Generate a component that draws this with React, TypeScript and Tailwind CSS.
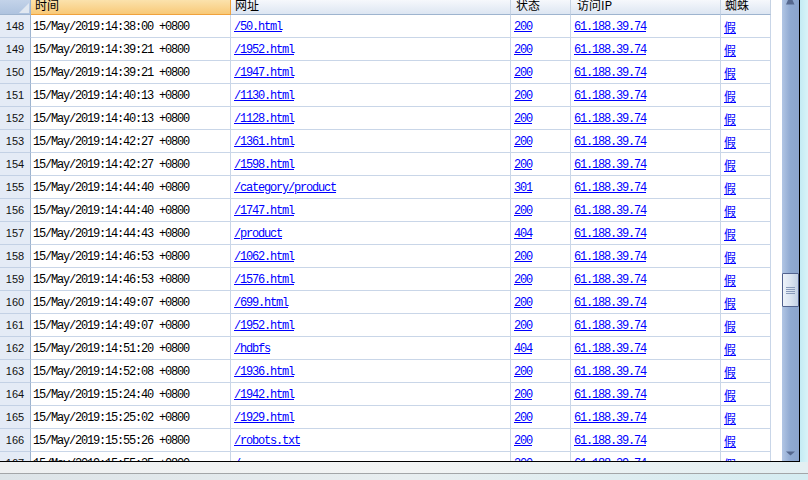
import React from "react";

type Row = { n: number; time: string; url: string; status: string };

const rows: Row[] = [
    { n: 148, time: "14:38:00", url: "/50.html", status: "200" },
    { n: 149, time: "14:39:21", url: "/1952.html", status: "200" },
    { n: 150, time: "14:39:21", url: "/1947.html", status: "200" },
    { n: 151, time: "14:40:13", url: "/1130.html", status: "200" },
    { n: 152, time: "14:40:13", url: "/1128.html", status: "200" },
    { n: 153, time: "14:42:27", url: "/1361.html", status: "200" },
    { n: 154, time: "14:42:27", url: "/1598.html", status: "200" },
    { n: 155, time: "14:44:40", url: "/category/product", status: "301" },
    { n: 156, time: "14:44:40", url: "/1747.html", status: "200" },
    { n: 157, time: "14:44:43", url: "/product", status: "404" },
    { n: 158, time: "14:46:53", url: "/1062.html", status: "200" },
    { n: 159, time: "14:46:53", url: "/1576.html", status: "200" },
    { n: 160, time: "14:49:07", url: "/699.html", status: "200" },
    { n: 161, time: "14:49:07", url: "/1952.html", status: "200" },
    { n: 162, time: "14:51:20", url: "/hdbfs", status: "404" },
    { n: 163, time: "14:52:08", url: "/1936.html", status: "200" },
    { n: 164, time: "15:24:40", url: "/1942.html", status: "200" },
    { n: 165, time: "15:25:02", url: "/1929.html", status: "200" },
    { n: 166, time: "15:55:26", url: "/robots.txt", status: "200" },
    { n: 167, time: "15:55:35", url: "/", status: "200" },
];

const mono = "font-['Liberation_Mono',monospace] text-[12px] tracking-[-1.2px] text-black pt-[2px]";
const cjk = "font-['Noto_Sans_CJK_SC',sans-serif] text-[12px] leading-[12px]";
const cols = "grid grid-cols-[31px_200px_280px_60px_150px_50px]";
const head = "border-r border-b border-r-[#c5d2e3] border-b-[#9eb4cf] bg-gradient-to-b from-[#f6f8fc] to-[#dde6f2] overflow-hidden";

function Link({ children }: { children: React.ReactNode }) {
    return <span className="text-[#0000ff] underline underline-offset-[1px]">{children}</span>;
}

export default function App() {
    return (
        <div className="w-[808px] h-[480px] overflow-hidden bg-[#eef1f2] flex flex-col">
            <div className="flex h-[462px] shrink-0">
                <div className="w-[800px] h-[462px] border-r border-b border-black bg-white flex overflow-hidden">
                    {/* grid */}
                    <div className="w-[771px] flex flex-col overflow-hidden text-black">
                        <div className={`${cols} h-[15px] shrink-0 ${cjk}`}>
                            <div className="border-r border-b border-[#9eb4cf] bg-gradient-to-b from-[#c3d3e9] to-[#aec3df] flex items-end justify-end pr-[1px] pb-[1px]">
                                <svg width="10" height="10" viewBox="0 0 10 10">
                                    <polygon points="10,0 10,10 0,10" fill="#e1e8f1" />
                                </svg>
                            </div>
                            <div className="border-r border-b border-[#f0a23c] bg-gradient-to-b from-[#fbe2ac] to-[#f8c977] pl-[4px] overflow-hidden">
                                <div className="-mt-[1px]">时间</div>
                            </div>
                            <div className={`${head} pl-[4px]`}><div className="-mt-[1px]">网址</div></div>
                            <div className={`${head} pl-[5px]`}><div className="-mt-[1px]">状态</div></div>
                            <div className={`${head} pl-[6px]`}><div className="-mt-[1px]">访问IP</div></div>
                            <div className={`${head} pl-[4px]`}><div className="-mt-[1px]">蜘蛛</div></div>
                        </div>
                        {rows.map(r => (
                            <div key={r.n} className={`${cols} h-[23px] shrink-0`}>
                                <div className="border-r border-b border-r-[#9eb4cf] border-b-[#c3d1e5] bg-[#e4ebf6] flex items-center justify-center font-['Liberation_Sans',sans-serif] text-[11px] text-[#111] pt-[1px]">{r.n}</div>
                                <div className={`border-r border-b border-[#c9d6e8] flex items-center pl-[2px] ${mono}`}>15/May/2019:{r.time} +0800</div>
                                <div className={`border-r border-b border-[#c9d6e8] flex items-center pl-[3px] ${mono}`}><Link>{r.url}</Link></div>
                                <div className={`border-r border-b border-[#c9d6e8] flex items-center pl-[3px] ${mono}`}><Link>{r.status}</Link></div>
                                <div className={`border-r border-b border-[#c9d6e8] flex items-center pl-[3px] ${mono}`}><Link>61.188.39.74</Link></div>
                                <div className="border-r border-b border-[#c9d6e8] flex items-center pl-[3px] pt-[1px] font-['Noto_Sans_CJK_SC',sans-serif] text-[12px]"><Link>假</Link></div>
                            </div>
                        ))}
                    </div>
                    <div className="w-[11px] shrink-0" />
                    {/* scrollbar */}
                    <div className="w-[17px] shrink-0 flex flex-col bg-gradient-to-r from-[#b2c6e4] via-[#8fa9d1] to-[#8ba4cd]">
                        <svg width="17" height="5" viewBox="0 0 17 5" className="shrink-0">
                            <polygon points="4,4.5 12.5,4.5 10.5,0 6,0" fill="#56688e" />
                        </svg>
                        <div className="h-[268px] shrink-0" />
                        <div className="h-[34px] shrink-0 border border-[#52628f] rounded-[1px] bg-gradient-to-r from-[#eef3fa] via-[#dbe4f1] to-[#c3d1e6] flex flex-col items-center justify-center gap-[1px]">
                            <div className="w-[9px] h-px bg-[#8a9bbb]" />
                            <div className="w-[9px] h-px bg-[#8a9bbb]" />
                            <div className="w-[9px] h-px bg-[#8a9bbb]" />
                            <div className="w-[9px] h-px bg-[#8a9bbb]" />
                        </div>
                        <div className="flex-1" />
                        <svg width="17" height="5" viewBox="0 0 17 5" className="shrink-0 mb-[5px]">
                            <polygon points="4,0.5 13,0.5 8.5,4.5" fill="#56688e" />
                        </svg>
                    </div>
                </div>
                <div className="w-[8px] bg-gradient-to-r from-[#c4ebf4] to-[#d8f3f8]" />
            </div>
            <div className="h-[11px] shrink-0 bg-gradient-to-r from-[#eef0f1] via-[#f2f4f4] to-[#e3eff2]" />
            <div className="h-px shrink-0 bg-[#a3a6a8]" />
            <div className="flex-1 bg-gradient-to-r from-[#dde4e8] via-[#e8eef0] to-[#d5ecf1]" />
        </div>
    );
}
